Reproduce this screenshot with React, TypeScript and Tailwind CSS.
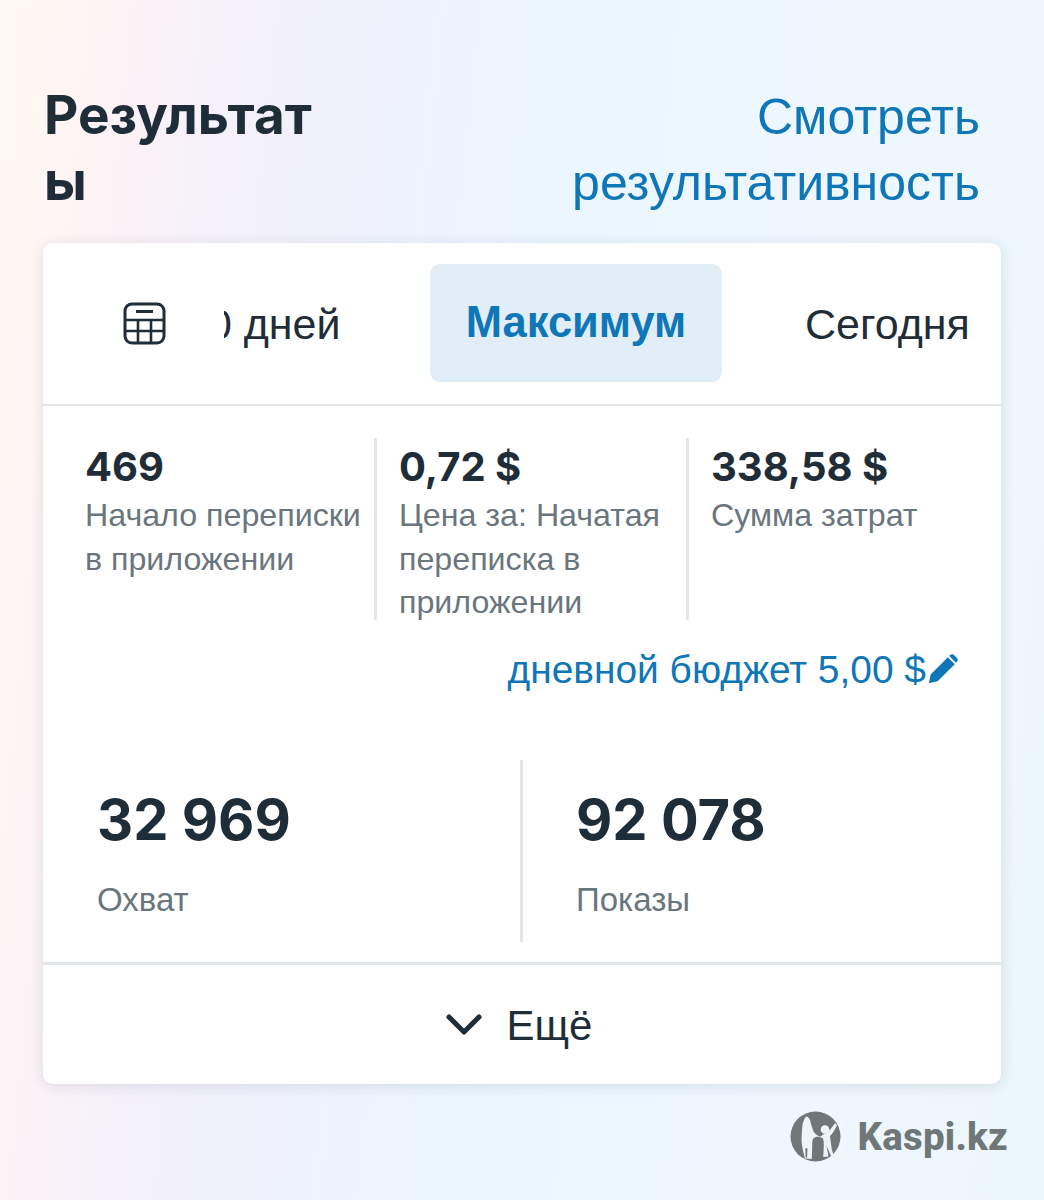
const sans = "font-['Liberation_Sans',Arial,sans-serif]";
const inter = "font-['Inter','Noto_Sans',sans-serif]";

function Metric({ value, label, border, width }: { value: string; label: string[]; border?: boolean; width: string }) {
  return (
    <div className={`${width} h-[182px] shrink-0 ${border ? "border-r-[3px] border-[#e3e6e8]" : ""}`}>
      <div className={`${inter} text-[40px] leading-[56px] font-bold text-[#1f2d38] mt-[1px]`}>{value}</div>
      <div className={`${sans} text-[32.2px] leading-[43.5px] text-[#6a767e] -mt-[1px] whitespace-nowrap`}>
        {label.map((l) => (
          <div key={l}>{l}</div>
        ))}
      </div>
    </div>
  );
}

function Stat({ value, label, className }: { value: string; label: string; className: string }) {
  return (
    <div className={className}>
      <div className={`${inter} text-[56px] leading-[68px] font-bold text-[#1f2d38] mt-[26px]`}>{value}</div>
      <div className={`${sans} text-[33px] leading-[40px] text-[#6a767e] mt-[26px]`}>{label}</div>
    </div>
  );
}

export default function App() {
  return (
    <div className="w-[1044px] h-[1200px] overflow-hidden bg-[linear-gradient(96deg,#fff9f2_0%,#fdf2f6_11%,#f4f1fb_21%,#eff2fc_34%,#ebf6fe_49%,#eff7fe_80%,#ebf6fa_100%)]">
      <div className="flex justify-between pt-[84px] pl-[44px] pr-[64px] h-[243px]">
        <div className={`${inter} w-[285px] break-all text-[53px] leading-[66px] font-bold text-[#1f2d38] -mt-[2px]`}>Результаты</div>
        <div className={`${sans} text-right text-[50px] leading-[66px] text-[#0f76b8]`}>
          Смотреть
          <br />
          результативность
        </div>
      </div>

      <div className="ml-[43px] w-[958px] h-[841px] rounded-[10px] bg-white shadow-[0_2px_14px_rgba(30,40,60,0.12)] overflow-hidden">
        <div className="h-[163px] border-b-[2px] border-[#e3e6e8] flex items-center">
          <svg className="ml-[80px] shrink-0 mb-[1px]" width="43" height="43" viewBox="0 0 43 43" fill="none" stroke="#1f2d38" strokeWidth="3">
            <rect x="2" y="2" width="39" height="39" rx="7" />
            <path d="M13 9.500h17" />
            <path d="M2 18h39M2 29h39M15 18V41M28 18V41" strokeWidth="2.6" />
          </svg>
          <div className="ml-[58px] w-[746px] h-[118px] overflow-hidden mb-[1px]">
            <div className={`${sans} -ml-[40px] flex items-center h-full text-[43px] text-[#1f2d38] whitespace-nowrap`}>
              <span className="w-[246px] shrink-0 pt-[3px]">30 дней</span>
              <span className="w-[292px] h-[118px] shrink-0 flex items-center justify-center rounded-[10px] bg-[#e1edf7] font-bold text-[#0f76b8] text-[43.5px]">
                Максимум
              </span>
              <span className="ml-[83px] shrink-0 pt-[3px]">Сегодня</span>
            </div>
          </div>
        </div>

        <div className="flex pt-[32px] pl-[42px]">
          <Metric width="w-[292px]" border value="469" label={["Начало переписки", "в приложении"]} />
          <div className="w-[22px] shrink-0" />
          <Metric width="w-[290px]" border value="0,72 $" label={["Цена за: Начатая", "переписка в", "приложении"]} />
          <div className="w-[22px] shrink-0" />
          <Metric width="w-[250px]" value="338,58 $" label={["Сумма затрат"]} />
        </div>

        <div className={`${sans} mt-[25px] pr-[41px] flex items-center justify-end text-[38.9px] leading-[50px] text-[#0f76b8]`}>
          дневной бюджет 5,00 $
          <svg width="34" height="34" viewBox="0 0 24 24" fill="#0f76b8" className="mb-[2px]">
            <path d="M2 22l1.3-6.200L15.400 3.700l4.900 4.900L8.200 20.700z" />
            <path d="M17 2.200c.8-.8 2-.8 2.800 0l2 2c.8.8.8 2 0 2.800L21.200 7.600l-4.800-4.800z" />
          </svg>
        </div>

        <div className="flex mt-[65px] h-[182px]">
          <Stat className="w-[480px] pl-[54px] border-r-[3px] border-[#e3e6e8]" value="32 969" label="Охват" />
          <Stat className="pl-[53px]" value="92 078" label="Показы" />
        </div>

        <div className="mt-[20px] h-[120px] border-t-[3px] border-[#e3e6e8] flex items-center justify-center gap-[25px] pr-[6px] pt-[3px]">
          <svg width="36" height="22" viewBox="0 0 36 22" fill="none" stroke="#1f2d38" strokeWidth="5" strokeLinecap="round" strokeLinejoin="round">
            <path d="M3 3l15 15L33 3" />
          </svg>
          <span className={`${sans} text-[42px] text-[#1f2d38]`}>Ещё</span>
        </div>
      </div>

      <div className="flex justify-end items-center gap-[17px] pr-[36px] mt-[24px]">
        <svg width="51" height="51" viewBox="0 0 51 51">
          <circle cx="25.500" cy="25.500" r="25" fill="#6f7779" />
          <path
            d="M16.500 5.500C19 6 20.500 9 20.700 12L23.300 20C25 23 28 25.500 31 25.500L33 23.500C37 23 41 18 45 12L47 14C45 19 42 23 40 25L41.700 38L43.500 44L41 45L38 38L35 32C34 27 31 25.700 27.300 25.700C24 25.700 22.500 28 22.300 31L21.800 48L15 47.500C13 40 11 32 11.700 25C12 18 12.500 12 13.300 11C14 9 15 6 16.500 5.500Z"
            fill="#edf5fb"
          />
          <path d="M33 27C34.500 32 33.500 40 33.300 46L38.500 45.500L36 32Z" fill="#edf5fb" />
          <circle cx="35" cy="18.500" r="4.300" fill="#edf5fb" />
          <path d="M15.500 37L17.500 37.500L17 47L15.500 46Z" fill="#6f7779" />
        </svg>
        <span className="font-['Roboto',sans-serif] text-[38.5px] font-extrabold text-[#6f7779] tracking-[0.2px]">Kaspi.kz</span>
      </div>
    </div>
  );
}
